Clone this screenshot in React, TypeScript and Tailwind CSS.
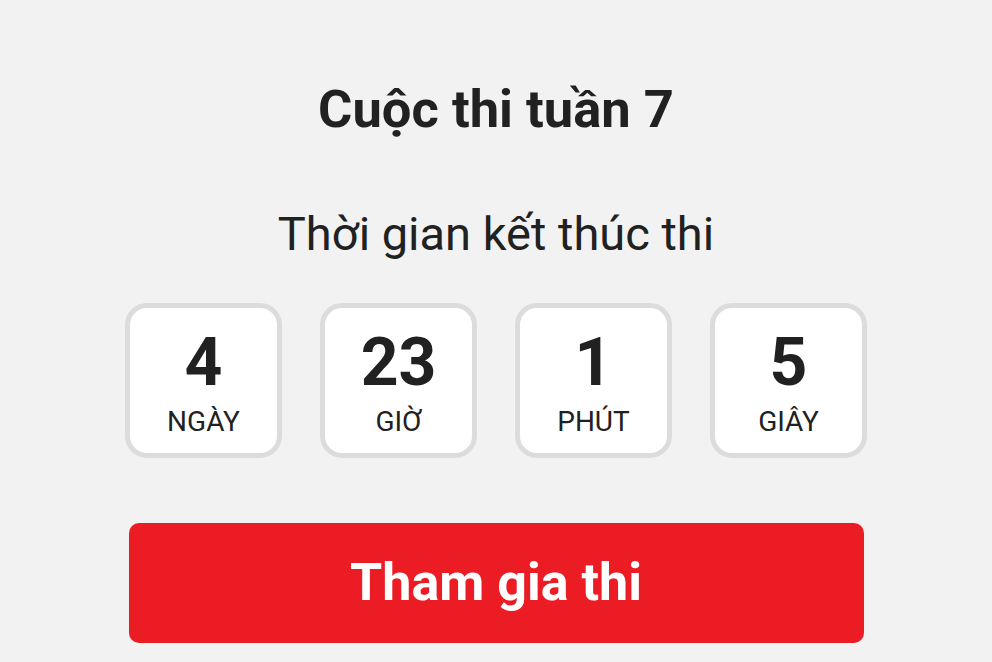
const units = [
  { value: 4, label: 'NGÀY' },
  { value: 23, label: 'GIỜ' },
  { value: 1, label: 'PHÚT' },
  { value: 5, label: 'GIÂY' },
];

export default function App() {
  return (
    <main className="min-h-[662px] bg-[#f2f2f2] font-['Roboto',sans-serif] text-[#212121] flex flex-col items-center pt-[77px]">
      <h1 className="text-[52.5px] font-bold leading-[64px]">Cuộc thi tuần 7</h1>
      <p className="mt-[65px] text-[47px] leading-[56px]">Thời gian kết thúc thi</p>

      <div className="mt-[41px] flex gap-[38px]">
        {units.map((u) => (
          <div
            key={u.label}
            className="w-[157px] h-[155px] bg-white border-[5px] border-[#dcdcdc] rounded-[22px] flex flex-col items-center pt-[24px]"
          >
            <span className="text-[66px] font-bold leading-[62px]">{u.value}</span>
            <span className="mt-[11px] text-[28px] leading-[34px]">{u.label}</span>
          </div>
        ))}
      </div>

      <button className="mt-[65px] w-[735px] h-[120px] rounded-[10px] bg-[#ec1c24] text-white text-[52px] font-bold">
        Tham gia thi
      </button>
    </main>
  );
}
